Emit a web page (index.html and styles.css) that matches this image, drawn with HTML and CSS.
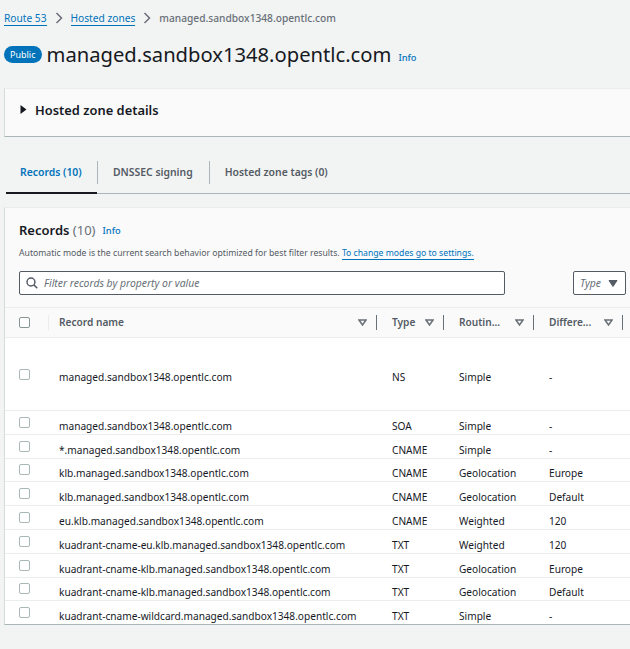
FILE: index.html
```html
<!DOCTYPE html>
<html lang="en">
<head>
	<meta charset="utf-8">
	<title>managed.sandbox1348.opentlc.com | Route 53</title>
	<link rel="stylesheet" href="styles.css">
</head>
<body>
<nav class="crumbs">
	<a href="#">Route 53</a>
	<svg class="crumb-sep" width="8" height="12" viewBox="0 0 8 12"><path d="M1.5 1l5 5-5 5" fill="none" stroke="#687078" stroke-width="1.5"/></svg>
	<a href="#">Hosted zones</a>
	<svg class="crumb-sep" width="8" height="12" viewBox="0 0 8 12"><path d="M1.5 1l5 5-5 5" fill="none" stroke="#687078" stroke-width="1.5"/></svg>
	<span class="crumb-current">managed.sandbox1348.opentlc.com</span>
</nav>

<header class="title-row">
	<span class="badge">Public</span>
	<h1>managed.sandbox1348.opentlc.com</h1>
	<a class="info info-title" href="#">Info</a>
</header>

<section class="details">
	<svg width="7" height="9" viewBox="0 0 7 9"><path d="M0.5 0l6 4.5-6 4.5z" fill="#16191f"/></svg>
	<h2>Hosted zone details</h2>
</section>

<div class="tabs">
	<a class="tab tab-active" href="#">Records (10)</a>
	<a class="tab" href="#">DNSSEC signing</a>
	<a class="tab" href="#">Hosted zone tags (0)</a>
</div>

<section class="records">
	<div class="records-head">
		<h2>Records <span class="count">(10)</span></h2>
		<a class="info" href="#">Info</a>
	</div>
	<p class="hint">Automatic mode is the current search behavior optimized for best filter results. <a href="#">To change modes go to settings.</a></p>
	<div class="filters">
		<div class="search">
			<svg width="12" height="12" viewBox="0 0 14 14"><circle cx="5.8" cy="5.8" r="4.6" fill="none" stroke="#545b64" stroke-width="1.7"/><path d="M9.2 9.2l4 4" stroke="#545b64" stroke-width="1.7"/></svg>
			<span>Filter records by property or value</span>
		</div>
		<div class="select">
			<span>Type</span>
			<svg width="10" height="7" viewBox="0 0 10 7"><path d="M1 0.5h8l-4 6z" fill="#545b64" stroke="#545b64"/></svg>
		</div>
	</div>
	<table>
		<colgroup>
			<col class="col-check">
			<col class="col-name">
			<col class="col-type">
			<col class="col-routing">
			<col class="col-diff">
		</colgroup>
		<thead>
			<tr>
				<th class="cell-check"><div class="check-in"><span class="box"></span></div></th>
				<th><div class="th-in"><span>Record name</span><svg class="sort" width="9" height="7" viewBox="0 0 9 7"><path d="M1 1h7L4.500 6z" fill="none" stroke="#687078" stroke-width="1.500"/></svg></div></th>
				<th><div class="th-in"><span>Type</span><svg class="sort" width="9" height="7" viewBox="0 0 9 7"><path d="M1 1h7L4.500 6z" fill="none" stroke="#687078" stroke-width="1.500"/></svg></div></th>
				<th><div class="th-in"><span>Routin...</span><svg class="sort" width="9" height="7" viewBox="0 0 9 7"><path d="M1 1h7L4.500 6z" fill="none" stroke="#687078" stroke-width="1.500"/></svg></div></th>
				<th><div class="th-in"><span>Differe...</span><svg class="sort" width="9" height="7" viewBox="0 0 9 7"><path d="M1 1h7L4.500 6z" fill="none" stroke="#687078" stroke-width="1.500"/></svg></div></th>
			</tr>
		</thead>
		<tbody>
			<tr class="row-tall"><td class="cell-check"><span class="box"></span></td><td>managed.sandbox1348.opentlc.com</td><td>NS</td><td>Simple</td><td>-</td></tr>
			<tr><td class="cell-check"><span class="box"></span></td><td>managed.sandbox1348.opentlc.com</td><td>SOA</td><td>Simple</td><td>-</td></tr>
			<tr><td class="cell-check"><span class="box"></span></td><td>*.managed.sandbox1348.opentlc.com</td><td>CNAME</td><td>Simple</td><td>-</td></tr>
			<tr><td class="cell-check"><span class="box"></span></td><td>klb.managed.sandbox1348.opentlc.com</td><td>CNAME</td><td>Geolocation</td><td>Europe</td></tr>
			<tr><td class="cell-check"><span class="box"></span></td><td>klb.managed.sandbox1348.opentlc.com</td><td>CNAME</td><td>Geolocation</td><td>Default</td></tr>
			<tr><td class="cell-check"><span class="box"></span></td><td>eu.klb.managed.sandbox1348.opentlc.com</td><td>CNAME</td><td>Weighted</td><td>120</td></tr>
			<tr><td class="cell-check"><span class="box"></span></td><td>kuadrant-cname-eu.klb.managed.sandbox1348.opentlc.com</td><td>TXT</td><td>Weighted</td><td>120</td></tr>
			<tr><td class="cell-check"><span class="box"></span></td><td>kuadrant-cname-klb.managed.sandbox1348.opentlc.com</td><td>TXT</td><td>Geolocation</td><td>Europe</td></tr>
			<tr><td class="cell-check"><span class="box"></span></td><td>kuadrant-cname-klb.managed.sandbox1348.opentlc.com</td><td>TXT</td><td>Geolocation</td><td>Default</td></tr>
			<tr><td class="cell-check"><span class="box"></span></td><td>kuadrant-cname-wildcard.managed.sandbox1348.opentlc.com</td><td>TXT</td><td>Simple</td><td>-</td></tr>
		</tbody>
	</table>
</section>
</body>
</html>
```

FILE: styles.css
```css
body {
	margin: 0;
	height: 649px;
	overflow: hidden;
	background: #f2f3f3;
	color: #16191f;
	font-family: "Noto Sans", "Open Sans", sans-serif;
	font-size: 10.15px;
}

a {
	color: #0073bb;
	text-decoration: none;
}

/* breadcrumbs */
.crumbs {
	display: flex;
	align-items: center;
	height: 16px;
	padding: 10px 0 0 4px;
	font-size: 10.2px;
}

.crumbs a {
	border-bottom: 1px solid #0073bb;
	line-height: 14px;
}

.crumb-sep {
	margin: 0 8px;
}

.crumb-current {
	color: #687078;
	font-weight: 500;
}

/* title */
.title-row {
	display: flex;
	align-items: center;
	height: 30px;
	margin-top: 13px;
	padding-left: 4px;
}

.badge {
	padding: 0 6px;
	border-radius: 9px;
	background: #0073bb;
	color: #fff;
	font-size: 9px;
	line-height: 17px;
}

h1 {
	margin: 0 0 0 5px;
	font-size: 20.2px;
	font-weight: 400;
}

.info {
	font-size: 9.3px;
	font-weight: 500;
}

.info-title {
	margin: 6px 0 0 7px;
}

/* details panel */
.details {
	display: flex;
	align-items: center;
	gap: 8px;
	box-sizing: border-box;
	height: 49px;
	margin: 19px 0 0 4px;
	padding: 0 0 6px 15px;
	background: #fafafa;
	border-top: 1px solid #eaeded;
	border-left: 1px solid #d5dbdb;
	border-bottom: 1px solid #aab7b8;
}

.details h2 {
	margin: 0;
	font-size: 12.9px;
	font-weight: 600;
}

/* tabs */
.tabs {
	display: flex;
	height: 33px;
	margin: 23px 0 0 6px;
	border-bottom: 1px solid #aab7b8;
}

.tab {
	position: relative;
	display: flex;
	align-items: center;
	box-sizing: border-box;
	height: 33px;
	padding: 0 16px 9px;
	color: #545b64;
	font-size: 10.4px;
	font-weight: 600;
}

.tab + .tab::before {
	content: "";
	position: absolute;
	top: 1px;
	bottom: 9px;
	left: 0;
	width: 1px;
	background: #aab7b8;
}

.tab-active {
	width: 91px;
	padding: 0 14px 9px;
	color: #0073bb;
	box-shadow: 0 1px 0 #16191f, inset 0 -1px 0 #16191f;
}

/* records panel */
.records {
	margin: 13px 0 0 4px;
	background: #fafafa;
	border-top: 1px solid #eaeded;
	border-left: 1px solid #d5dbdb;
	border-bottom: 1px solid #aab7b8;
}

.records-head {
	display: flex;
	align-items: center;
	gap: 7px;
	height: 18px;
	padding: 13px 0 0 14px;
}

.records-head h2 {
	margin: 0;
	font-size: 13px;
	font-weight: 600;
}

.count {
	color: #687078;
	font-weight: 400;
}

.hint {
	margin: 7px 0 0 14px;
	color: #545b64;
	font-size: 8.67px;
	line-height: 14px;
	white-space: nowrap;
}

.hint a {
	border-bottom: 1px solid #0073bb;
}

.filters {
	display: flex;
	gap: 68px;
	margin: 11px 0 0 14px;
}

.search,
.select {
	display: flex;
	align-items: center;
	box-sizing: border-box;
	height: 24px;
	background: #fff;
	border: 1px solid #545b64;
	border-radius: 2px;
	color: #687078;
	font-style: italic;
	font-size: 10.4px;
}

.search {
	gap: 6px;
	width: 486px;
	padding-left: 6px;
}

.select {
	justify-content: space-between;
	width: 53px;
	padding: 0 7px 0 6px;
}

/* table */
table {
	width: 633px;
	margin-top: 12px;
	border-collapse: collapse;
	table-layout: fixed;
	background: #fff;
}

.col-check { width: 54px; }
.col-name { width: 333px; }
.col-type { width: 67px; }
.col-routing { width: 90px; }
.col-diff { width: 89px; }

th {
	height: 29px;
	padding: 0 15px 0 0;
	background: #fafafa;
	border-top: 1px solid #eaeded;
	border-bottom: 1px solid #eaeded;
	color: #545b64;
	font-size: 10.15px;
	font-weight: 600;
	text-align: left;
}

.th-in {
	display: flex;
	align-items: center;
	justify-content: space-between;
	height: 15px;
	padding-right: 9px;
	border-right: 1px solid #687078;
}

.th-in span {
	margin-bottom: 2px;
}

.check-in {
	display: flex;
	align-items: center;
	height: 15px;
	margin-right: -5px;
	border-right: 1px solid #eaeded;
}

td {
	height: 22.8px;
	padding: 0;
	border-bottom: 1px solid #eaeded;
	font-size: 10.15px;
	vertical-align: bottom;
	line-height: 16px;
	white-space: nowrap;
}

.row-tall td {
	height: 66px;
	padding-top: 6px;
	vertical-align: middle;
}

.row-tall .cell-check {
	padding-top: 0;
}

.row-tall .box {
	margin-bottom: 0;
}

tbody tr:last-child td {
	border-bottom: none;
}

.cell-check {
	padding-left: 14px;
}

.box {
	display: block;
	box-sizing: border-box;
	width: 11px;
	height: 11px;
	margin-bottom: 6px;
	background: #fff;
	border: 1px solid #aab7b8;
	border-radius: 2px;
}

th .box {
	margin: 0;
	border-color: #879596;
}
```
